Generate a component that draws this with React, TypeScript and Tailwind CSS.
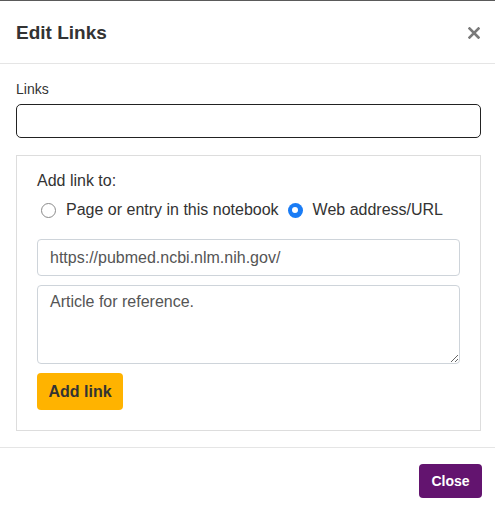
import React from "react";

const font = { fontFamily: '"Liberation Sans", Arial, sans-serif' };

const Radio = ({ checked }: { checked?: boolean }) =>
  checked ? (
    <span className="w-[15px] h-[15px] rounded-full bg-[#1a7cf5] flex items-center justify-center shrink-0">
      <span className="w-[6px] h-[6px] rounded-full bg-white" />
    </span>
  ) : (
    <span className="w-[15px] h-[15px] rounded-full border border-[#8a8a8a] bg-white shrink-0" />
  );

export default function App() {
  return (
    <div className="w-[495px] h-[512px] bg-white overflow-hidden text-[#333]" style={font}>
      <div className="h-px bg-[#5a5a5a]" />

      {/* header */}
      <div className="h-[63px] flex items-center justify-between pl-4 pr-[15px] border-b border-[#e5e5e5]">
        <h4 className="text-[19px] font-bold text-[#333] mt-[3px]">Edit Links</h4>
        <svg width="12" height="12" viewBox="0 0 12 12" className="mt-[1px]">
          <path d="M1.5 1.5 L10.5 10.5 M10.5 1.5 L1.5 10.5" stroke="#7a7a7a" strokeWidth="2.6" strokeLinecap="square" />
        </svg>
      </div>

      {/* body */}
      <div className="pl-4 pr-[14px] pt-[15px] pb-4 border-b border-[#e5e5e5]">
        <label className="block text-[14px] leading-5 mb-[5px]">Links</label>
        <input
          className="block w-full h-[34px] border border-[#222] rounded-[5px] outline-none px-3"
          readOnly
        />

        <div className="mt-[17px] border border-[#ddd] px-5 pt-[15px] pb-5">
          <div className="text-[16px] leading-5">Add link to:</div>
          <div className="mt-[9px] flex items-center text-[16px] leading-5 ml-1">
            <Radio />
            <span className="ml-[10px]">Page or entry in this notebook</span>
            <span className="ml-[9px]" />
            <Radio checked />
            <span className="ml-[10px]">Web address/URL</span>
          </div>

          <input
            className="mt-[19px] block w-full h-[37px] border border-[#ced4da] rounded-[4px] px-3 text-[16px] text-[#555] outline-none"
            style={font}
            defaultValue="https://pubmed.ncbi.nlm.nih.gov/"
            readOnly
          />
          <textarea
            className="mt-[9px] block w-full h-[79px] border border-[#ced4da] rounded-[4px] px-3 pt-[6px] text-[16px] leading-5 text-[#555] outline-none"
            style={font}
            defaultValue="Article for reference."
            readOnly
          />
          <button className="mt-[9px] w-[86px] h-[37px] bg-[#ffb300] rounded-[4px] text-[16px] font-bold text-[#333]">
            Add link
          </button>
        </div>
      </div>

      {/* footer */}
      <div className="flex justify-end pt-4 pr-[13px]">
        <button className="w-[63px] h-[34px] bg-[#63146f] rounded-[4px] text-[14px] font-bold text-white">
          Close
        </button>
      </div>
    </div>
  );
}
